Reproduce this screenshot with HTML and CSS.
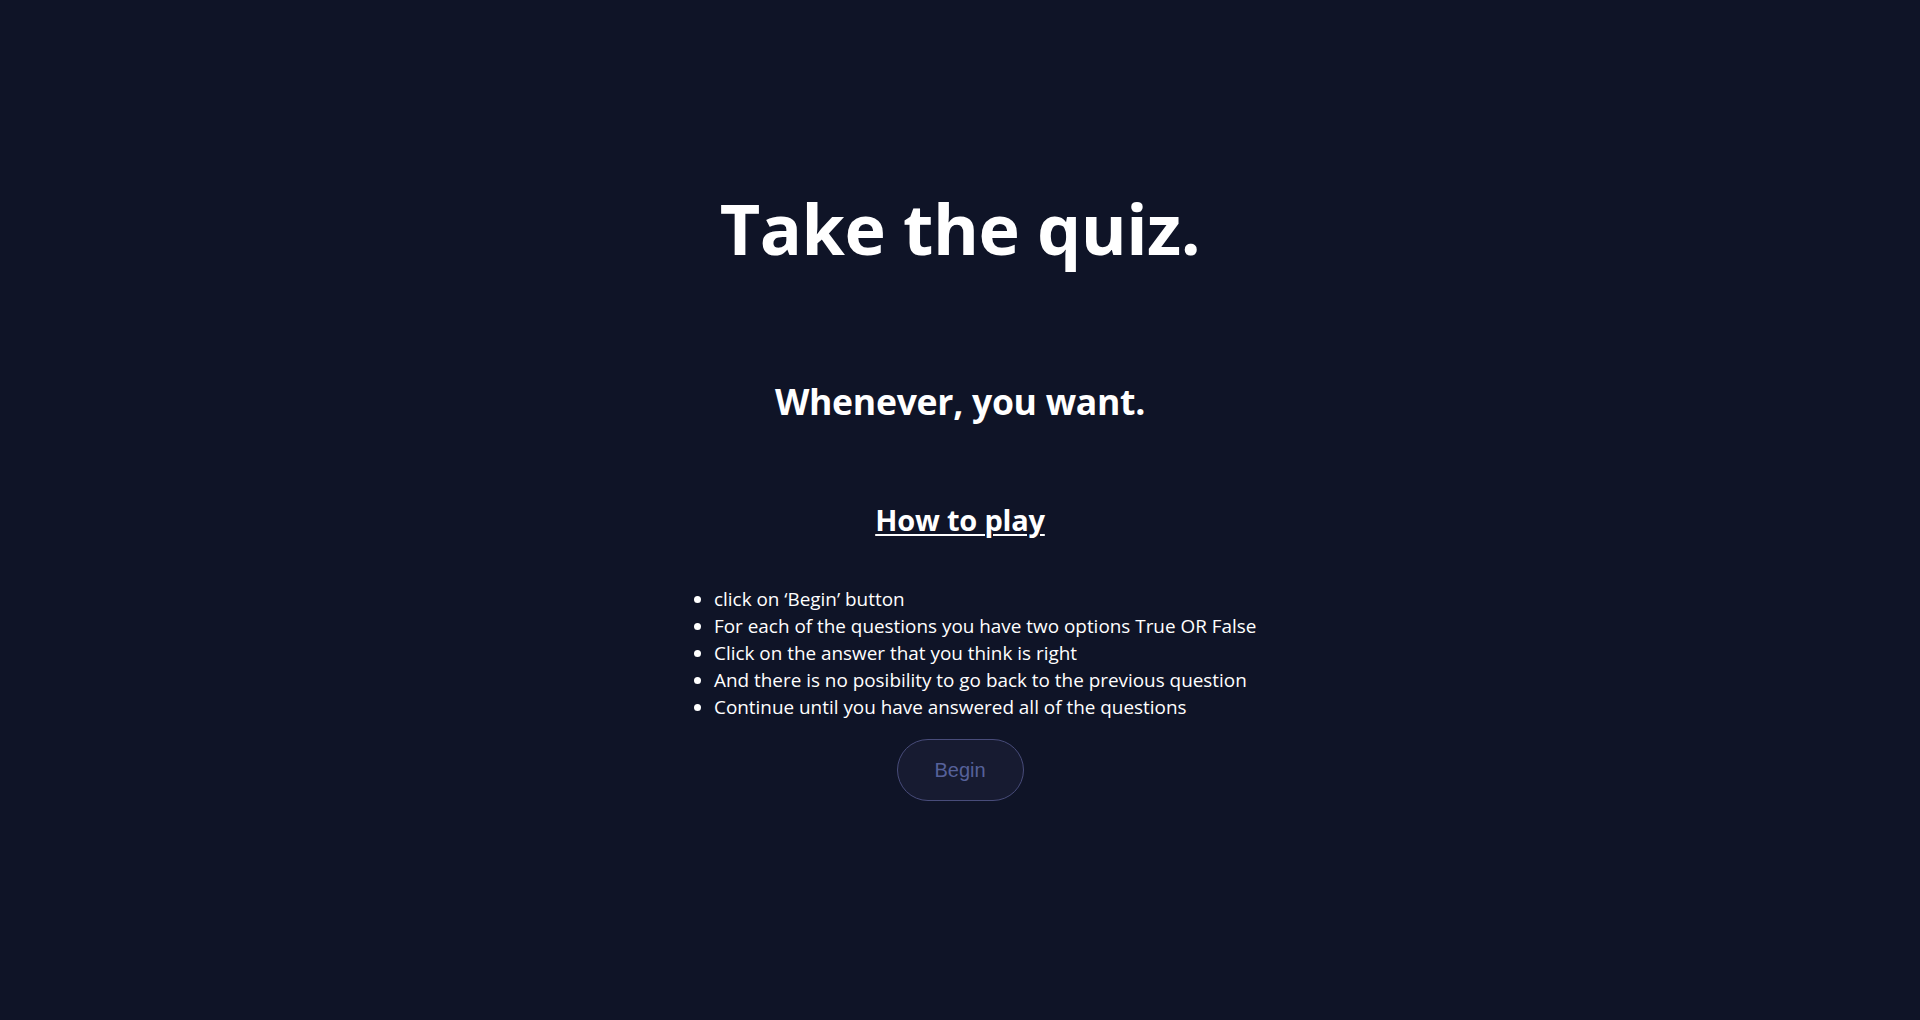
FILE: index.html
```
<!DOCTYPE html>
<html lang="en">
<head>
<meta charset="utf-8">
<title>Quiz</title>
<link rel="stylesheet" href="styles.css">
</head>
<body>
<main class="intro">
  <h1 class="title">Take the quiz.</h1>
  <h2 class="subtitle">Whenever, you want.</h2>
  <h3 class="howto">How to play</h3>
  <ul class="rules">
    <li>click on ‘Begin’ button</li>
    <li>For each of the questions you have two options True OR False</li>
    <li>Click on the answer that you think is right</li>
    <li>And there is no posibility to go back to the previous question</li>
    <li>Continue until you have answered all of the questions</li>
  </ul>
  <button class="begin" type="button">Begin</button>
</main>
</body>
</html>
```
FILE: styles.css
```
html, body {
  margin: 0;
  padding: 0;
  background: #0f1427;
  height: 100%;
}
body {
  font-family: "Open Sans", "Noto Sans", sans-serif;
  color: #ffffff;
}
.intro {
  display: flex;
  flex-direction: column;
  align-items: center;
  padding-top: 184px;
}
.title {
  margin: 0;
  font-size: 70px;
  font-weight: 700;
  line-height: 88px;
  letter-spacing: -0.5px;
}
.subtitle {
  margin: 106px 0 0 0;
  font-size: 35.6px;
  font-weight: 700;
  line-height: 47px;
  letter-spacing: -0.3px;
}
.howto {
  margin: 75px 0 0 0;
  font-size: 29px;
  font-weight: 700;
  line-height: 39px;
  text-decoration: underline;
  text-decoration-thickness: 2px;
  text-underline-offset: 3px;
  letter-spacing: -0.2px;
}
.rules {
  align-self: stretch;
  margin: 47px 0 0 calc(50% - 286px);
  padding: 0 0 0 40px;
  font-size: 18.9px;
  line-height: 27px;
  text-align: left;
}
.begin {
  margin-top: 18px;
  width: 127px;
  height: 62px;
  border-radius: 31px;
  border: 1px solid #484c7a;
  background: #171b31;
  color: #56619a;
  font-family: "Liberation Sans", Arial, sans-serif;
  font-size: 20px;
  cursor: pointer;
}
```
